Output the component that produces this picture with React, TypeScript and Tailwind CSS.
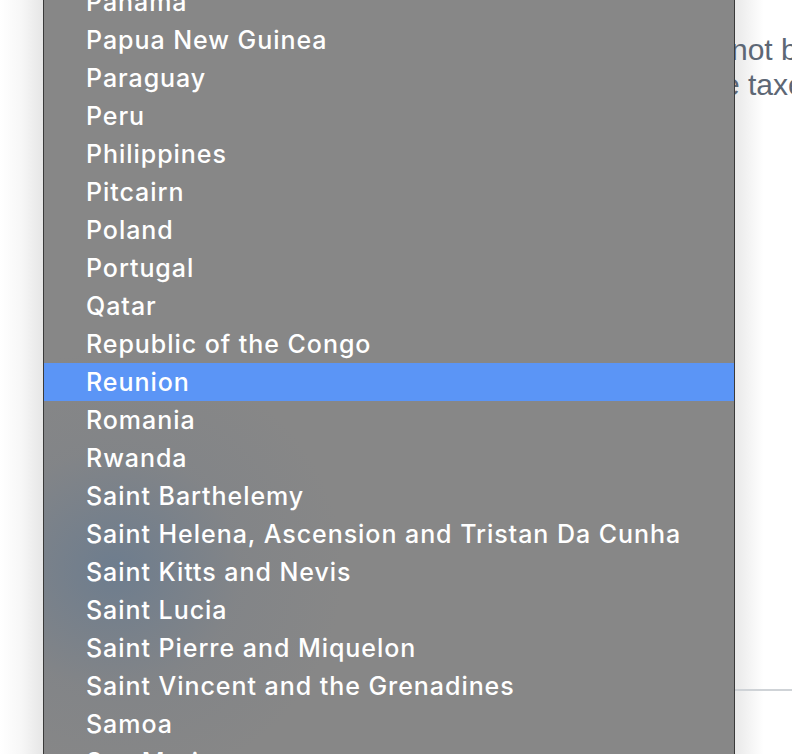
import React from 'react'

const countries = [
  'Panama',
  'Papua New Guinea',
  'Paraguay',
  'Peru',
  'Philippines',
  'Pitcairn',
  'Poland',
  'Portugal',
  'Qatar',
  'Republic of the Congo',
  'Reunion',
  'Romania',
  'Rwanda',
  'Saint Barthelemy',
  'Saint Helena, Ascension and Tristan Da Cunha',
  'Saint Kitts and Nevis',
  'Saint Lucia',
  'Saint Pierre and Miquelon',
  'Saint Vincent and the Grenadines',
  'Samoa',
  'San Marino',
]

const App: React.FC = () => {
  const selected = 'Reunion'
  return (
    <div className="flex h-[754px] w-[792px] overflow-hidden bg-white">
      <div className="h-full w-[43px] shrink-0 bg-gradient-to-r from-white via-[#f7f7f7] to-[#e6e6e6]" />
      <div className="h-full w-[692px] shrink-0 overflow-hidden border-x border-[#3a3a3a] bg-[#878787] bg-[image:radial-gradient(ellipse_230px_220px_at_70px_570px,rgba(78,112,150,0.45),rgba(110,122,138,0.18)_55%,transparent_100%)]">
        <ul className="mt-[-17px] font-['Inter',sans-serif] text-[25px] font-medium tracking-[0.95px] text-white">
          {countries.map((c) => (
            <li
              key={c}
              className={`flex h-[38px] items-center pl-[42px] leading-none ${c === selected ? 'bg-[#5b95f6]' : ''}`}
            >
              {c}
            </li>
          ))}
        </ul>
      </div>
      <div className="relative flex h-full flex-1 flex-col overflow-hidden bg-gradient-to-r from-[#e9e9e9] via-white to-white to-[40%]">
        <div className="mt-[32px] font-['Liberation_Sans',sans-serif] text-[30px] leading-[35px] text-[#5d6775]">
          <div className="ml-[-4px] whitespace-nowrap">not be</div>
          <div className="ml-[-37px] whitespace-nowrap">the taxes</div>
        </div>
        <div className="mt-auto mb-[63px] h-[2px] w-full bg-[#cfd3d7]" />
      </div>
    </div>
  )
}

export default App
